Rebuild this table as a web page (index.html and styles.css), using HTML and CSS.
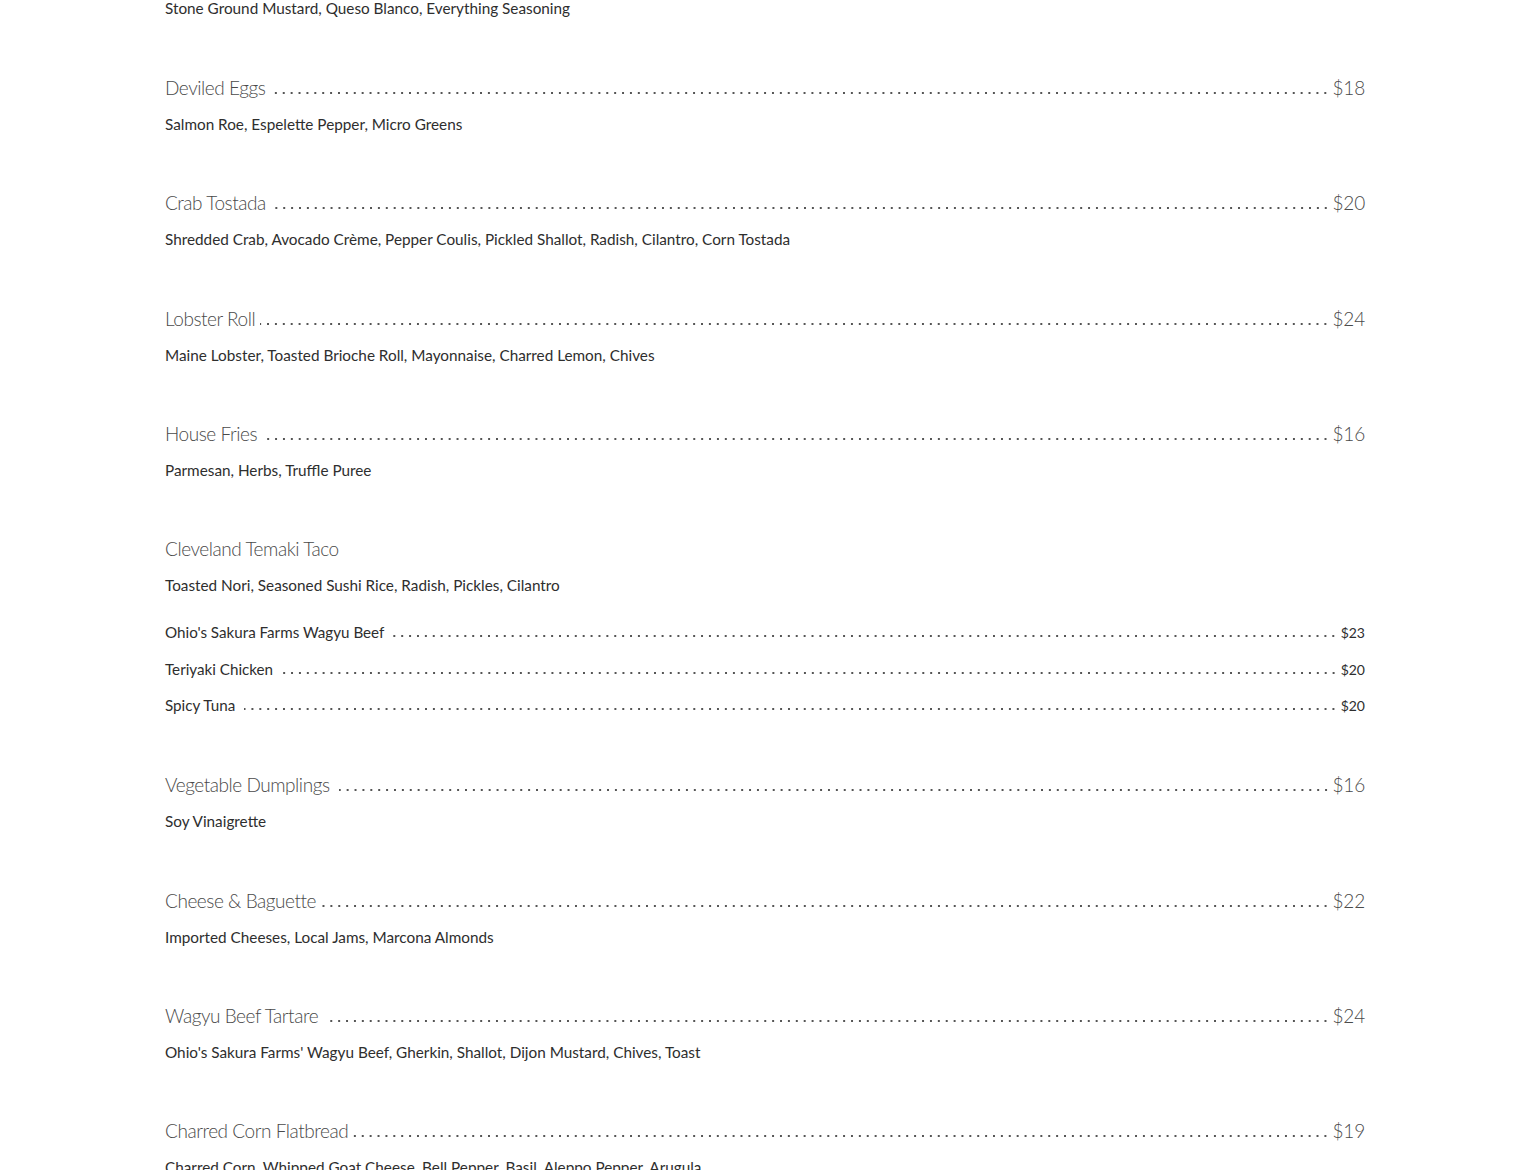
FILE: index.html
```html
<!DOCTYPE html>
<html>
<head>
<meta charset="utf-8">
<link rel="stylesheet" href="styles.css">
</head>
<body>
<main class="menu">
  <div class="item item-partial">
    <p class="desc">Stone Ground Mustard, Queso Blanco, Everything Seasoning</p>
  </div>

  <div class="item">
    <div class="row"><span class="name">Deviled Eggs</span><span class="leader"></span><span class="price">$18</span></div>
    <p class="desc">Salmon Roe, Espelette Pepper, Micro Greens</p>
  </div>

  <div class="item">
    <div class="row"><span class="name">Crab Tostada</span><span class="leader leader-wide"></span><span class="price">$20</span></div>
    <p class="desc">Shredded Crab, Avocado Crème, Pepper Coulis, Pickled Shallot, Radish, Cilantro, Corn Tostada</p>
  </div>

  <div class="item">
    <div class="row"><span class="name">Lobster Roll</span><span class="leader"></span><span class="price">$24</span></div>
    <p class="desc">Maine Lobster, Toasted Brioche Roll, Mayonnaise, Charred Lemon, Chives</p>
  </div>

  <div class="item">
    <div class="row"><span class="name">House Fries</span><span class="leader leader-wide"></span><span class="price">$16</span></div>
    <p class="desc">Parmesan, Herbs, Truffle Puree</p>
  </div>

  <div class="item">
    <div class="row"><span class="name">Cleveland Temaki Taco</span></div>
    <p class="desc">Toasted Nori, Seasoned Sushi Rice, Radish, Pickles, Cilantro</p>
    <div class="sublist">
      <div class="subrow"><span class="subname">Ohio's Sakura Farms Wagyu Beef</span><span class="leader leader-wide"></span><span class="subprice">$23</span></div>
      <div class="subrow"><span class="subname">Teriyaki Chicken</span><span class="leader"></span><span class="subprice">$20</span></div>
      <div class="subrow"><span class="subname">Spicy Tuna</span><span class="leader leader-wide"></span><span class="subprice">$20</span></div>
    </div>
  </div>

  <div class="item">
    <div class="row"><span class="name">Vegetable Dumplings</span><span class="leader leader-wide"></span><span class="price">$16</span></div>
    <p class="desc">Soy Vinaigrette</p>
  </div>

  <div class="item">
    <div class="row"><span class="name">Cheese &amp; Baguette</span><span class="leader"></span><span class="price">$22</span></div>
    <p class="desc">Imported Cheeses, Local Jams, Marcona Almonds</p>
  </div>

  <div class="item">
    <div class="row"><span class="name">Wagyu Beef Tartare</span><span class="leader leader-wide"></span><span class="price">$24</span></div>
    <p class="desc">Ohio's Sakura Farms' Wagyu Beef, Gherkin, Shallot, Dijon Mustard, Chives, Toast</p>
  </div>

  <div class="item">
    <div class="row"><span class="name">Charred Corn Flatbread</span><span class="leader"></span><span class="price">$19</span></div>
    <p class="desc">Charred Corn, Whipped Goat Cheese, Bell Pepper, Basil, Aleppo Pepper, Arugula</p>
  </div>
</main>
</body>
</html>
```

FILE: styles.css
```css
html, body {
  margin: 0;
  padding: 0;
  background: #ffffff;
}

body {
  overflow: hidden;
  height: 1170px;
}

.menu {
  width: 1200px;
  margin: 0 auto;
  font-family: "Lato", "Liberation Sans", sans-serif;
}

.item {
  padding-bottom: 55.25px;
}

.item-partial {
  margin-top: -16px;
  padding-bottom: 56px;
}

.row {
  display: flex;
  align-items: baseline;
  height: 24px;
  line-height: 24px;
}

.name,
.price {
  font-family: "Lato", sans-serif;
  font-weight: 300;
  font-size: 19px;
  color: #4a4a4a;
  white-space: nowrap;
  letter-spacing: -0.45px;
}

.price {
  letter-spacing: -0.2px;
}

.leader {
  flex: 1;
  height: 4px;
  margin: 0 3px 0 5px;
  background-image: radial-gradient(circle, #555555 0.8px, rgba(255,255,255,0) 1.3px);
  background-size: 7.9px 4px;
  background-repeat: repeat-x;
  background-position: right 0 bottom 0;
}

.leader-wide {
  margin-left: 9px;
}

.desc {
  margin: 12px 0 0 0;
  height: 24px;
  line-height: 24px;
  font-family: "Lato", sans-serif;
  font-size: 15.3px;
  color: #2e2e2e;
  white-space: nowrap;
}

.sublist {
  margin-top: 17px;
  margin-bottom: -5.5px;
}

.subrow {
  display: flex;
  align-items: baseline;
  height: 36.5px;
  line-height: 36.5px;
}

.subname {
  font-family: "Lato", sans-serif;
  font-size: 15.2px;
  color: #2e2e2e;
  white-space: nowrap;
}

.subprice {
  font-family: "Lato", sans-serif;
  font-size: 14px;
  color: #2e2e2e;
  white-space: nowrap;
}
```
